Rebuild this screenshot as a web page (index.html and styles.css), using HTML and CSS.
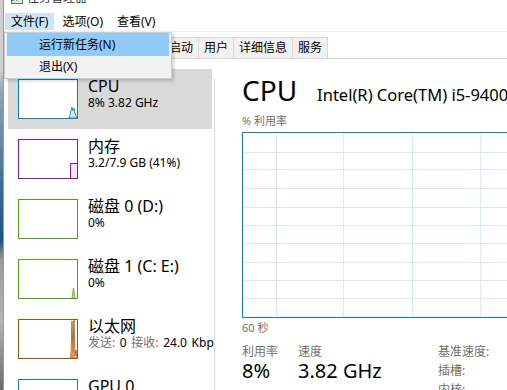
FILE: index.html
```html
<!DOCTYPE html>
<html lang="zh-CN">
<head>
<meta charset="utf-8">
<title>任务管理器</title>
<link rel="stylesheet" href="styles.css">
</head>
<body>
<div class="strip"></div>
<div class="window">
  <div class="titlebar">
    <div class="tb-inner">
      <svg class="tb-icon" width="12" height="12" viewBox="0 0 12 12"><rect x="0.5" y="0.5" width="11" height="11" fill="#e8e8e8" stroke="#6a6a6a"/><path d="M1 9 L4 6 L6 8 L10 3" fill="none" stroke="#3c8c3c" stroke-width="1.4"/></svg>
      <span class="tb-text">任务管理器</span>
    </div>
  </div>
  <div class="menubar">
    <span class="mi active">文件(F)</span>
    <span class="mi">选项(O)</span>
    <span class="mi">查看(V)</span>
  </div>
  <div class="tabs">
    <span class="tab">进程</span>
    <span class="tab sel">性能</span>
    <span class="tab">应用历史记录</span>
    <span class="tab">启动</span>
    <span class="tab">用户</span>
    <span class="tab">详细信息</span>
    <span class="tab last">服务</span>
  </div>
  <div class="main">
    <div class="sidebar">
      <div class="item selected">
        <div class="thumb cpu">
          <svg width="58" height="38" viewBox="0 0 58 38"><path d="M50 38 L51 35 L52 30 L53 27 L54 31 L55 28 L56 33 L57 36 L58 37 L58 38 Z" fill="#d3e7f4" stroke="#117dbb" stroke-width="0.8"/></svg>
        </div>
        <div class="itext">
          <div class="ititle">CPU</div>
          <div class="isub">8% 3.82 GHz</div>
        </div>
      </div>
      <div class="item">
        <div class="thumb mem">
          <svg width="58" height="38" viewBox="0 0 58 38"><path d="M51.5 38 V23.5 H58 V38 Z" fill="#f3e6f7"/><path d="M51.5 38 V23.5 H58" fill="none" stroke="#8b12ae" stroke-width="1"/></svg>
        </div>
        <div class="itext">
          <div class="ititle">内存</div>
          <div class="isub">3.2/7.9 GB (41%)</div>
        </div>
      </div>
      <div class="item">
        <div class="thumb disk"></div>
        <div class="itext">
          <div class="ititle">磁盘 0 (D:)</div>
          <div class="isub">0%</div>
        </div>
      </div>
      <div class="item">
        <div class="thumb disk">
          <svg width="58" height="38" viewBox="0 0 58 38"><path d="M53 38 L54.5 28 L56 38 Z" fill="#cfe8bd" stroke="#4da60c" stroke-width="0.8"/></svg>
        </div>
        <div class="itext">
          <div class="ititle">磁盘 1 (C: E:)</div>
          <div class="isub">0%</div>
        </div>
      </div>
      <div class="item">
        <div class="thumb eth">
          <svg width="58" height="38" viewBox="0 0 58 38"><path d="M51 38 L52 34 L53 1 L54 33 L55 0 L56 36 L57 30 L58 38 Z" fill="#f2dcc8" stroke="#a74f01" stroke-width="0.8"/><path d="M51 38 L52 31 L53 35 L54 30 L55 36 L56 38 Z" fill="#e7894a"/></svg>
        </div>
        <div class="itext">
          <div class="ititle">以太网</div>
          <div class="isub eth-sub"><span class="lbl">发送:</span> 0 <span class="lbl">接收:</span> 24.0 Kbps</div>
        </div>
      </div>
      <div class="item">
        <div class="thumb gpu"></div>
        <div class="itext">
          <div class="ititle">GPU 0</div>
          <div class="isub">Intel(R) UHD Graphics 630</div>
        </div>
      </div>
    </div>
    <div class="vsep"></div>
    <div class="detail">
      <div class="dhead">
        <span class="dtitle">CPU</span>
        <span class="dmodel">Intel(R) Core(TM) i5-9400 CPU @ 2.90GHz</span>
      </div>
      <div class="caption">% 利用率</div>
      <div class="graph">
        <svg width="340" height="184" viewBox="0 0 340 184">
          <g stroke="#d9eaf4" stroke-width="1" shape-rendering="crispEdges">
            <line x1="0" y1="19.5" x2="340" y2="19.5"/>
            <line x1="0" y1="36.5" x2="340" y2="36.5"/>
            <line x1="0" y1="55.5" x2="340" y2="55.5"/>
            <line x1="0" y1="74.5" x2="340" y2="74.5"/>
            <line x1="0" y1="92.5" x2="340" y2="92.5"/>
            <line x1="0" y1="110.5" x2="340" y2="110.5"/>
            <line x1="0" y1="129.5" x2="340" y2="129.5"/>
            <line x1="0" y1="147.5" x2="340" y2="147.5"/>
            <line x1="0" y1="165.5" x2="340" y2="165.5"/>
            <line x1="33.5" y1="0" x2="33.5" y2="184"/>
            <line x1="100.5" y1="0" x2="100.5" y2="184"/>
            <line x1="169.5" y1="0" x2="169.5" y2="184"/>
            <line x1="237.5" y1="0" x2="237.5" y2="184"/>
            <line x1="305.5" y1="0" x2="305.5" y2="184"/>
          </g>
        </svg>
      </div>
      <div class="caption secs">60 秒</div>
      <div class="stats">
        <div class="scol c1">
          <div class="slabel">利用率</div>
          <div class="svalue">8%</div>
        </div>
        <div class="scol c2">
          <div class="slabel">速度</div>
          <div class="svalue">3.82 GHz</div>
        </div>
        <div class="scol c3">
          <div class="slabel">基准速度:</div>
          <div class="slabel row">插槽:</div>
          <div class="slabel row">内核:</div>
        </div>
      </div>
    </div>
  </div>
  <div class="dropdown">
    <div class="ditem hot">运行新任务(N)</div>
    <div class="ditem">退出(X)</div>
  </div>
</div>
</body>
</html>
```
FILE: styles.css
```css
html, body {
  margin: 0;
  padding: 0;
}
body {
  width: 507px;
  height: 390px;
  overflow: hidden;
  display: flex;
  background: #fff;
  font-family: "Noto Sans", "Noto Sans CJK SC", sans-serif;
  color: #000;
}
.strip {
  width: 3px;
  flex: none;
  background: linear-gradient(#cfcfcf 0, #cfcfcf 70px, #8fa6b8 90px, #3d6a8e 190px, #1f5579 240px, #9a9a9a 260px, #b5b5b5 320px, #6a6a6a 390px);
}
.window {
  flex: 1;
  min-width: 0;
  border-left: 1px solid #9a9a9a;
  position: relative;
  display: flex;
  flex-direction: column;
  overflow: hidden;
  background: #fff;
}
/* title bar (mostly scrolled off the top) */
.titlebar {
  height: 10px;
  overflow: hidden;
  flex: none;
}
.tb-inner {
  margin-top: -11px;
  height: 18px;
  display: flex;
  align-items: center;
  padding-left: 7px;
}
.tb-icon {
  flex: none;
}
.tb-text {
  margin-left: 4px;
  font-size: 12px;
  line-height: 18px;
  color: #333;
}
/* menu bar */
.menubar {
  border-bottom: 1px solid #f0f0f0;
  padding: 3px 0 0 1px;
  display: flex;
  align-items: flex-start;
  flex: none;
  height: 18px;
}
.mi {
  height: 17px;
  line-height: 17px;
  font-size: 12px;
  padding: 0 6px 0 7px;
  margin-right: 1px;
}
.mi.active {
  padding-left: 6px;
  background: #cce4f7;
}
/* tabs */
.tabs {
  margin-top: 5px;
  height: 21px;
  border-bottom: 1px solid #d9d9d9;
  padding-left: 6px;
  display: flex;
  align-items: flex-end;
  flex: none;
}
.tab {
  height: 20px;
  line-height: 20px;
  font-size: 12px;
  padding: 0 5px;
  border: 1px solid #d9d9d9;
  border-bottom: none;
  border-right: none;
  background: #f0f0f0;
}
.tab.sel {
  background: #fff;
}
.tab.last {
  border-right: 1px solid #d9d9d9;
}
/* main area */
.main {
  flex: 1;
  display: flex;
  min-height: 0;
}
.sidebar {
  margin-top: 10px;
  margin-left: 4px;
  width: 206px;
  flex: none;
  overflow: hidden;
}
.item {
  width: 204px;
  height: 60px;
  box-sizing: border-box;
  padding: 10px 0 0 10px;
  display: flex;
  align-items: flex-start;
  white-space: nowrap;
}
.item.selected {
  background: #d9d9d9;
}
.thumb {
  width: 60px;
  height: 40px;
  box-sizing: border-box;
  border: 1px solid #117dbb;
  background: #fff;
  flex: none;
  margin-right: 10px;
}
.thumb svg {
  display: block;
}
.thumb.cpu { border-color: #117dbb; }
.thumb.mem { border-color: #8b12ae; }
.thumb.disk { border-color: #4da60c; }
.thumb.eth { border-color: #a74f01; }
.thumb.gpu { border-color: #117dbb; }
.itext {
  margin-top: -2px;
}
.ititle {
  font-size: 16px;
  line-height: 18px;
}
.isub {
  font-size: 12px;
  line-height: 15px;
}
.eth-sub {
  word-spacing: 1.5px;
}
.lbl {
  color: #707070;
}
.vsep {
  width: 1px;
  flex: none;
  margin-top: 20px;
  background: #dcdcdc;
}
.detail {
  margin-left: 27px;
  margin-top: 13px;
  flex: 1;
  min-width: 0;
  overflow: hidden;
  white-space: nowrap;
}
.dhead {
  display: flex;
  align-items: baseline;
}
.dtitle {
  font-size: 28px;
  line-height: 36px;
  font-weight: 400;
}
.dmodel {
  font-size: 16.5px;
  margin-left: 20px;
}
.caption {
  font-size: 11px;
  line-height: 14px;
  color: #707070;
  margin-top: 6px;
}
.graph {
  margin-top: 4px;
  width: 342px;
  height: 186px;
  box-sizing: border-box;
  border: 1px solid #117dbb;
}
.graph svg {
  display: block;
}
.caption.secs {
  margin-top: 3px;
}
.stats {
  display: flex;
  margin-top: 9px;
}
.scol.c1 { width: 56px; }
.scol.c2 { width: 140px; }
.slabel {
  font-size: 12px;
  line-height: 15px;
  color: #707070;
}
.slabel.row {
  margin-top: 4px;
}
.svalue {
  font-size: 20px;
  line-height: 24px;
  margin-top: 0;
}
/* dropdown menu */
.dropdown {
  position: absolute;
  left: 0;
  top: 32px;
  width: 168px;
  box-sizing: border-box;
  border: 1px solid #cccccc;
  background: #f2f2f2;
  padding: 0 2px;
  box-shadow: 2px 2px 3px rgba(0, 0, 0, 0.18);
}
.ditem {
  font-size: 12px;
  height: 22px;
  line-height: 22px;
  padding-left: 32px;
}
.ditem.hot {
  background: #91c9f7;
  height: 23px;
  line-height: 23px;
}
```
